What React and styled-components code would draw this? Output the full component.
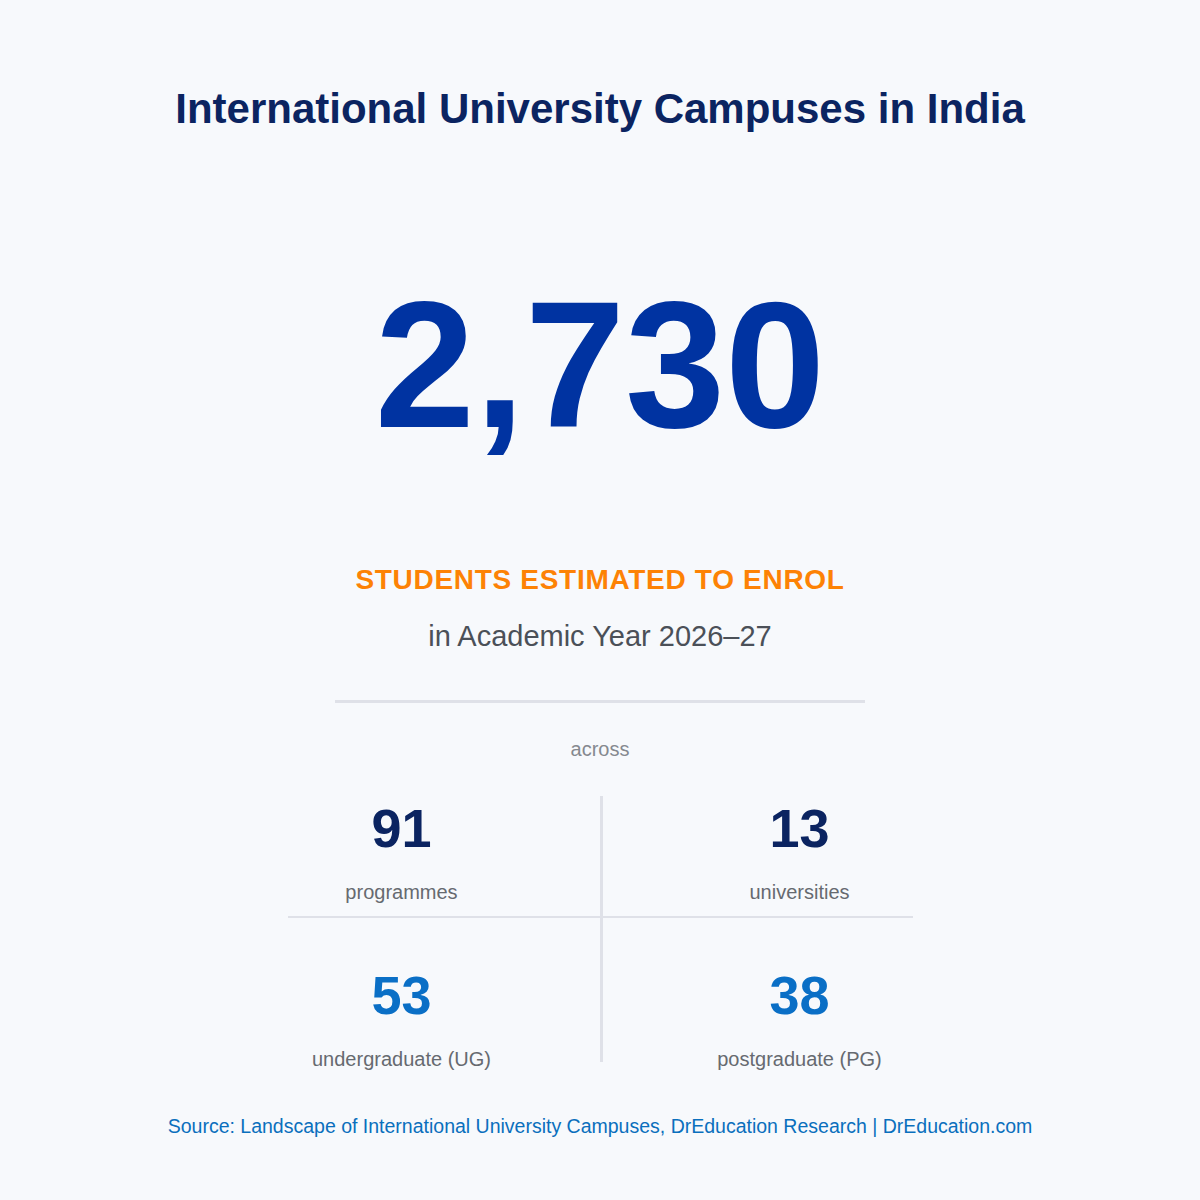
import React from 'react'
import styled, { createGlobalStyle } from 'styled-components'

const GlobalStyle = createGlobalStyle`
  html, body {
    margin: 0;
    padding: 0;
    background: #f7f9fc;
  }
  body {
    font-family: "Liberation Sans", Arial, sans-serif;
  }
`

const Page = styled.div`
  min-height: 1200px;
  box-sizing: border-box;
  padding-top: 84px;
  display: flex;
  flex-direction: column;
  align-items: center;
  background: #f7f9fc;
`

const Title = styled.h1`
  margin: 0;
  font-size: 42px;
  line-height: 50px;
  font-weight: 700;
  color: #0b2461;
`

const BigNumber = styled.div`
  margin-top: 141px;
  font-size: 180px;
  line-height: 180px;
  font-weight: 700;
  color: #0033a1;
`

const Kicker = styled.div`
  margin-top: 108px;
  font-size: 28px;
  line-height: 34px;
  font-weight: 700;
  letter-spacing: 0.7px;
  text-transform: uppercase;
  color: #fd8205;
`

const Subline = styled.div`
  margin-top: 22px;
  font-size: 29px;
  line-height: 35px;
  color: #4b5058;
`

const Rule = styled.hr`
  margin: 46px 0 0;
  width: 530px;
  height: 3px;
  border: 0;
  background: #dfe1e8;
`

const Across = styled.div`
  margin-top: 34px;
  font-size: 20px;
  line-height: 24px;
  color: #85898f;
`

const StatsGrid = styled.div`
  margin-top: 35px;
  display: grid;
  grid-template-columns: 396px 3px 394px;
  grid-template-rows: auto 2px auto;
`

const Cell = styled.div`
  display: flex;
  flex-direction: column;
  align-items: center;
  grid-column: ${p => (p.$right ? 3 : 1)};
  grid-row: ${p => (p.$bottom ? 3 : 1)};
  padding: ${p => (p.$bottom ? '50px 0 0' : '5px 0 12px')};
`

const Value = styled.div`
  font-size: 54px;
  line-height: 54px;
  font-weight: 700;
  color: ${p => (p.$accent ? '#0a6fc6' : '#0b2461')};
`

const Label = styled.div`
  margin-top: 25px;
  font-size: 20px;
  line-height: 24px;
  color: #666a70;
`

const VLine = styled.div`
  grid-column: 2;
  grid-row: 1 / 4;
  margin-bottom: 9px;
  background: #dfe1e8;
`

const HLine = styled.div`
  grid-column: 1 / 4;
  grid-row: 2;
  margin: 0 84px;
  background: #dfe1e8;
`

const Source = styled.div`
  margin-top: 44px;
  font-size: 19.5px;
  line-height: 23px;
  color: #0a6fbd;
`

const stats = [
  { value: '91', label: 'programmes' },
  { value: '13', label: 'universities', right: true },
  { value: '53', label: 'undergraduate (UG)', bottom: true, accent: true },
  { value: '38', label: 'postgraduate (PG)', bottom: true, right: true, accent: true },
]

const App = () => {
  return (
    <Page>
      <GlobalStyle />
      <Title>International University Campuses in India</Title>
      <BigNumber>2,730</BigNumber>
      <Kicker>Students estimated to enrol</Kicker>
      <Subline>in Academic Year 2026–27</Subline>
      <Rule />
      <Across>across</Across>
      <StatsGrid>
        <VLine />
        <HLine />
        {stats.map(s => (
          <Cell key={s.label} $right={s.right} $bottom={s.bottom}>
            <Value $accent={s.accent}>{s.value}</Value>
            <Label>{s.label}</Label>
          </Cell>
        ))}
      </StatsGrid>
      <Source>
        Source: Landscape of International University Campuses, DrEducation Research | DrEducation.com
      </Source>
    </Page>
  )
}

export default App
